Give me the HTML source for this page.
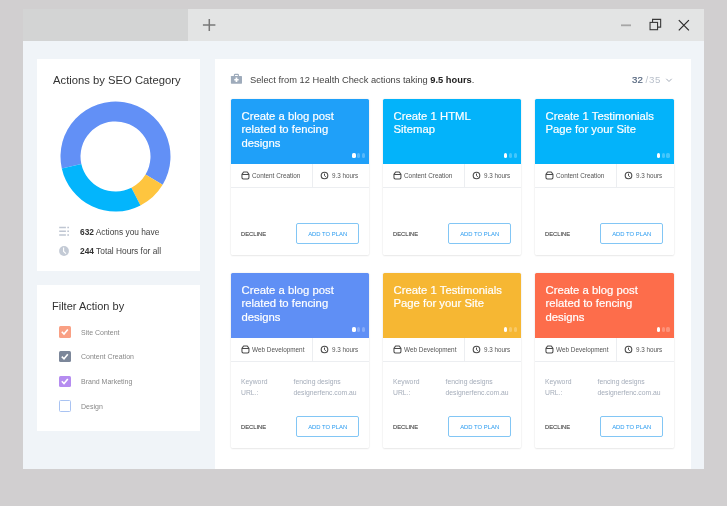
<!DOCTYPE html>
<html><head><meta charset="utf-8">
<style>
*{margin:0;padding:0;box-sizing:border-box}
html,body{width:727px;height:506px;overflow:hidden;background:#d1cfd0;font-family:"Liberation Sans",sans-serif}
.t,.card,.cbl{will-change:transform}
.abs{position:absolute}
#tabL{left:23px;top:9px;width:165px;height:32px;background:#d3d4d4}
#tabR{left:188px;top:9px;width:516px;height:32px;background:#e3e4e4}
#content{left:23px;top:41px;width:681px;height:428px;background:#f0f4f8}
.panel{background:#fff}
#p1{left:36.6px;top:59px;width:163.8px;height:212px}
#p2{left:36.6px;top:285px;width:163.8px;height:146px}
#p3{left:214.5px;top:59px;width:476px;height:410px}
.t{position:absolute;white-space:nowrap;line-height:1}
.card{position:absolute;width:138.5px;background:#fff;border-radius:1.5px;box-shadow:0 0 2px rgba(0,0,0,0.11),0 1px 2px rgba(0,0,0,0.07)}
.card .hd{position:absolute;left:0;top:0;right:0;height:64.6px;border-radius:1.5px 1.5px 0 0}
.card .ttl{position:absolute;left:10.5px;top:10.8px;color:#fff;font-size:11.3px;line-height:13.5px;white-space:nowrap;-webkit-text-stroke:0.2px #fff}
.dots{position:absolute;right:4px;bottom:5.7px;height:5.2px;width:12.8px}
.dots i{position:absolute;top:0;width:3.2px;height:5.2px;border-radius:1.6px;background:rgba(255,255,255,0.26)}
.dots i:nth-child(1){left:0;background:#fff}
.dots i:nth-child(2){left:4.8px}
.dots i:nth-child(3){left:9.6px}
.meta{position:absolute;left:0;top:64.6px;right:0;height:24.5px;border-bottom:1px solid #eceef1}
.meta .div{position:absolute;left:81px;top:0;width:1px;height:23.5px;background:#eceef1}
.meta .cat{position:absolute;left:21px;top:9.2px;font-size:6.4px;color:#555;white-space:nowrap;line-height:1}
.meta .hrs{position:absolute;left:101px;top:9.2px;font-size:6.3px;color:#555;white-space:nowrap;line-height:1}
.meta svg{position:absolute}
.dec{position:absolute;left:10px;font-size:5.8px;color:#4a4a4a;-webkit-text-stroke:0.12px #4a4a4a;line-height:1;white-space:nowrap}
.btn{position:absolute;left:65.2px;width:63px;height:21px;border:1.2px solid #82c6f5;border-radius:2px}
.btn span{position:absolute;left:0;right:0;top:7.7px;text-align:center;font-size:5.9px;color:#2a9bf0;line-height:1;white-space:nowrap}
.kw{position:absolute;left:10px;font-size:6.8px;color:#a5adba;line-height:1;white-space:nowrap}
.kv{position:absolute;left:62.5px;font-size:6.8px;color:#a5adba;line-height:1;white-space:nowrap}
.cb{position:absolute;left:59px;width:11.5px;height:11.5px;border-radius:1.5px}
.cbl{position:absolute;left:81px;font-size:7px;color:#888;line-height:1;white-space:nowrap}
</style></head><body>
<div id="tabL" class="abs"></div>
<div id="tabR" class="abs"></div>
<svg class="abs" style="left:202px;top:18px" width="14" height="14" viewBox="0 0 14 14"><path d="M7.3 0.9V13M0.9 6.9H13.4" stroke="#787878" stroke-width="1.5"/></svg>
<svg class="abs" style="left:615px;top:12px" width="80" height="26" viewBox="0 0 80 26">
<path d="M6 13.3H16" stroke="#a6a6a6" stroke-width="1.8"/>
<path d="M37.55 10.4V7.35H45.65V15.15H42.6" fill="none" stroke="#3a3a3a" stroke-width="1.1"/>
<rect x="35.05" y="10.4" width="7.5" height="7.3" fill="none" stroke="#3a3a3a" stroke-width="1.1"/>
<path d="M63.8 8.2L73.9 18.3M73.9 8.2L63.8 18.3" stroke="#2a2a2a" stroke-width="1.2"/>
</svg>
<div id="content" class="abs"></div>
<div id="p1" class="abs panel"></div>
<div id="p2" class="abs panel"></div>
<div id="p3" class="abs panel"></div>

<!-- left panel 1 -->
<div class="t" style="left:53px;top:74.8px;font-size:11.25px;color:#333">Actions by SEO Category</div>
<svg class="abs" style="left:55px;top:96.4px" width="121" height="121" viewBox="-60.5 -60.5 121 121">
<g transform="rotate(0)"><path fill="#6290f6" d="M-53.70 11.90A55 55 0 1 1 47.14 28.33L30.00 18.03A35 35 0 1 0 -34.17 7.58Z"/><path fill="#fec53f" d="M47.14 28.33A55 55 0 0 1 24.97 49.01L15.89 31.19A35 35 0 0 0 30.00 18.03Z"/><path fill="#03b5fc" d="M24.97 49.01A55 55 0 0 1 -53.70 11.90L-34.17 7.58A35 35 0 0 0 15.89 31.19Z"/></g>
</svg>
<svg class="abs" style="left:58px;top:225px" width="12" height="12" viewBox="0 0 12 12"><g stroke="#bfc6d2" stroke-width="1.5"><path d="M1.2 2.6H7.9M9.3 2.6H11M1.2 6.3H7.9M9.3 6.3H11M1.2 9.9H7.9M9.3 9.9H11"/></g></svg>
<div class="t" style="left:80px;top:227.5px;font-size:8.35px;color:#444"><b style="color:#333">632</b> Actions you have</div>
<svg class="abs" style="left:58px;top:245px" width="12" height="12" viewBox="0 0 12 12"><circle cx="6" cy="6" r="4.9" fill="#c3cad5"/><path d="M5.6 2.6V6.4L8 8.6" fill="none" stroke="#fff" stroke-width="1.1"/></svg>
<div class="t" style="left:80px;top:247.3px;font-size:8.35px;color:#444"><b style="color:#333">244</b> Total Hours for all</div>

<!-- left panel 2 -->
<div class="t" style="left:52px;top:300.5px;font-size:11px;color:#333">Filter Action by</div>
<div class="cb" style="top:326px;background:#f9a084"></div>
<div class="cb" style="top:350.8px;background:#7c879a"></div>
<div class="cb" style="top:375.5px;background:#b58cf0"></div>
<div class="cb" style="top:400.3px;border:1px solid #a9c3f2;background:#fff"></div>
<svg class="abs" style="left:59px;top:326px" width="12" height="80" viewBox="0 0 12 80"><g fill="none" stroke="#fff" stroke-width="1.6"><path d="M2.8 5.8L5 8L8.8 3.4"/><path d="M2.8 30.6L5 32.8L8.8 28.2"/><path d="M2.8 55.3L5 57.5L8.8 52.9"/></g></svg>
<div class="cbl" style="top:328.5px">Site Content</div>
<div class="cbl" style="top:353.3px">Content Creation</div>
<div class="cbl" style="top:378px">Brand Marketing</div>
<div class="cbl" style="top:402.8px">Design</div>

<!-- right header -->
<svg class="abs" style="left:230px;top:73px" width="13" height="12" viewBox="0 0 13 12"><path d="M4.4 3V1.9Q4.4 1.4 4.9 1.4H7.9Q8.4 1.4 8.4 1.9V3" fill="none" stroke="#9eabbb" stroke-width="1.1"/><rect x="0.9" y="2.9" width="11.1" height="7.8" rx="0.6" fill="#9eabbb"/><path d="M6.45 4.6V8.9M4.3 6.75H8.6" stroke="#fff" stroke-width="1.7"/></svg>
<div class="t" style="left:250px;top:75.5px;font-size:9.3px;color:#444">Select from 12 Health Check actions taking <b style="color:#222">9.5 hours</b>.</div>
<div class="t" style="left:631.7px;top:74.8px;font-size:9.7px;color:#5b6b82"><span style="-webkit-text-stroke:0.2px #56677f;color:#56677f">32</span> <span style="color:#b9c0cb;letter-spacing:0.7px">/35</span></div>
<svg class="abs" style="left:664.5px;top:77px" width="8" height="6" viewBox="0 0 8 6"><path d="M1.3 1.8L4 4.5L6.7 1.8" fill="none" stroke="#a3abb8" stroke-width="1"/></svg>

<div id="cards"><div class="card" style="left:231px;top:99px;height:156px;width:138.2px"><div class="hd" style="background:#1fa0f9"><div class="ttl">Create a blog post<br>related to fencing<br>designs</div><div class="dots"><i></i><i></i><i></i></div></div><div class="meta"><div class="div"></div><svg style="left:9.5px;top:6px" width="10" height="10" viewBox="0 0 10 10"><path d="M2.6 1.95H6.3L7.95 4.4V7.6Q7.95 8.95 6.6 8.95H2.3Q0.95 8.95 0.95 7.6V4.4Z M0.95 4.4H7.95" fill="none" stroke="#4a4a4a" stroke-width="1.05" stroke-linejoin="round"/></svg><div class="cat">Content Creation</div><svg style="left:89.3px;top:7px" width="9" height="9" viewBox="0 0 9 9"><circle cx="4.5" cy="4.5" r="3.3" fill="none" stroke="#4a4a4a" stroke-width="1.1"/><path d="M4.5 2.6V4.7L5.8 5.7" fill="none" stroke="#4a4a4a" stroke-width="1"/></svg><div class="hrs">9.3 hours</div></div><div class="dec" style="top:132.5px">DECLINE</div><div class="btn" style="top:124px"><span>ADD TO PLAN</span></div></div>
<div class="card" style="left:383px;top:99px;height:156px;width:138.1px"><div class="hd" style="background:#03b3fa"><div class="ttl">Create 1 HTML<br>Sitemap</div><div class="dots"><i></i><i></i><i></i></div></div><div class="meta"><div class="div"></div><svg style="left:9.5px;top:6px" width="10" height="10" viewBox="0 0 10 10"><path d="M2.6 1.95H6.3L7.95 4.4V7.6Q7.95 8.95 6.6 8.95H2.3Q0.95 8.95 0.95 7.6V4.4Z M0.95 4.4H7.95" fill="none" stroke="#4a4a4a" stroke-width="1.05" stroke-linejoin="round"/></svg><div class="cat">Content Creation</div><svg style="left:89.3px;top:7px" width="9" height="9" viewBox="0 0 9 9"><circle cx="4.5" cy="4.5" r="3.3" fill="none" stroke="#4a4a4a" stroke-width="1.1"/><path d="M4.5 2.6V4.7L5.8 5.7" fill="none" stroke="#4a4a4a" stroke-width="1"/></svg><div class="hrs">9.3 hours</div></div><div class="dec" style="top:132.5px">DECLINE</div><div class="btn" style="top:124px"><span>ADD TO PLAN</span></div></div>
<div class="card" style="left:535.3px;top:99px;height:156px;width:138.6px"><div class="hd" style="background:#03b3fa"><div class="ttl">Create 1 Testimonials<br>Page for your Site</div><div class="dots"><i></i><i></i><i></i></div></div><div class="meta"><div class="div"></div><svg style="left:9.5px;top:6px" width="10" height="10" viewBox="0 0 10 10"><path d="M2.6 1.95H6.3L7.95 4.4V7.6Q7.95 8.95 6.6 8.95H2.3Q0.95 8.95 0.95 7.6V4.4Z M0.95 4.4H7.95" fill="none" stroke="#4a4a4a" stroke-width="1.05" stroke-linejoin="round"/></svg><div class="cat">Content Creation</div><svg style="left:89.3px;top:7px" width="9" height="9" viewBox="0 0 9 9"><circle cx="4.5" cy="4.5" r="3.3" fill="none" stroke="#4a4a4a" stroke-width="1.1"/><path d="M4.5 2.6V4.7L5.8 5.7" fill="none" stroke="#4a4a4a" stroke-width="1"/></svg><div class="hrs">9.3 hours</div></div><div class="dec" style="top:132.5px">DECLINE</div><div class="btn" style="top:124px"><span>ADD TO PLAN</span></div></div>
<div class="card" style="left:231px;top:273px;height:175px;width:138.2px"><div class="hd" style="background:#5f8ff5"><div class="ttl">Create a blog post<br>related to fencing<br>designs</div><div class="dots"><i></i><i></i><i></i></div></div><div class="meta"><div class="div"></div><svg style="left:9.5px;top:6px" width="10" height="10" viewBox="0 0 10 10"><path d="M2.6 1.95H6.3L7.95 4.4V7.6Q7.95 8.95 6.6 8.95H2.3Q0.95 8.95 0.95 7.6V4.4Z M0.95 4.4H7.95" fill="none" stroke="#4a4a4a" stroke-width="1.05" stroke-linejoin="round"/></svg><div class="cat">Web Development</div><svg style="left:89.3px;top:7px" width="9" height="9" viewBox="0 0 9 9"><circle cx="4.5" cy="4.5" r="3.3" fill="none" stroke="#4a4a4a" stroke-width="1.1"/><path d="M4.5 2.6V4.7L5.8 5.7" fill="none" stroke="#4a4a4a" stroke-width="1"/></svg><div class="hrs">9.3 hours</div></div><div class="kw" style="top:106px">Keyword</div><div class="kv" style="top:106px">fencing designs</div><div class="kw" style="top:116.8px">URL.:</div><div class="kv" style="top:116.8px">designerfenc.com.au</div><div class="dec" style="top:151.5px">DECLINE</div><div class="btn" style="top:143px"><span>ADD TO PLAN</span></div></div>
<div class="card" style="left:383px;top:273px;height:175px;width:138.1px"><div class="hd" style="background:#f6b733"><div class="ttl">Create 1 Testimonials<br>Page for your Site</div><div class="dots"><i></i><i></i><i></i></div></div><div class="meta"><div class="div"></div><svg style="left:9.5px;top:6px" width="10" height="10" viewBox="0 0 10 10"><path d="M2.6 1.95H6.3L7.95 4.4V7.6Q7.95 8.95 6.6 8.95H2.3Q0.95 8.95 0.95 7.6V4.4Z M0.95 4.4H7.95" fill="none" stroke="#4a4a4a" stroke-width="1.05" stroke-linejoin="round"/></svg><div class="cat">Web Development</div><svg style="left:89.3px;top:7px" width="9" height="9" viewBox="0 0 9 9"><circle cx="4.5" cy="4.5" r="3.3" fill="none" stroke="#4a4a4a" stroke-width="1.1"/><path d="M4.5 2.6V4.7L5.8 5.7" fill="none" stroke="#4a4a4a" stroke-width="1"/></svg><div class="hrs">9.3 hours</div></div><div class="kw" style="top:106px">Keyword</div><div class="kv" style="top:106px">fencing designs</div><div class="kw" style="top:116.8px">URL.:</div><div class="kv" style="top:116.8px">designerfenc.com.au</div><div class="dec" style="top:151.5px">DECLINE</div><div class="btn" style="top:143px"><span>ADD TO PLAN</span></div></div>
<div class="card" style="left:535.3px;top:273px;height:175px;width:138.6px"><div class="hd" style="background:#fd6d4b"><div class="ttl">Create a blog post<br>related to fencing<br>designs</div><div class="dots"><i></i><i></i><i></i></div></div><div class="meta"><div class="div"></div><svg style="left:9.5px;top:6px" width="10" height="10" viewBox="0 0 10 10"><path d="M2.6 1.95H6.3L7.95 4.4V7.6Q7.95 8.95 6.6 8.95H2.3Q0.95 8.95 0.95 7.6V4.4Z M0.95 4.4H7.95" fill="none" stroke="#4a4a4a" stroke-width="1.05" stroke-linejoin="round"/></svg><div class="cat">Web Development</div><svg style="left:89.3px;top:7px" width="9" height="9" viewBox="0 0 9 9"><circle cx="4.5" cy="4.5" r="3.3" fill="none" stroke="#4a4a4a" stroke-width="1.1"/><path d="M4.5 2.6V4.7L5.8 5.7" fill="none" stroke="#4a4a4a" stroke-width="1"/></svg><div class="hrs">9.3 hours</div></div><div class="kw" style="top:106px">Keyword</div><div class="kv" style="top:106px">fencing designs</div><div class="kw" style="top:116.8px">URL.:</div><div class="kv" style="top:116.8px">designerfenc.com.au</div><div class="dec" style="top:151.5px">DECLINE</div><div class="btn" style="top:143px"><span>ADD TO PLAN</span></div></div></div>
</body></html>
